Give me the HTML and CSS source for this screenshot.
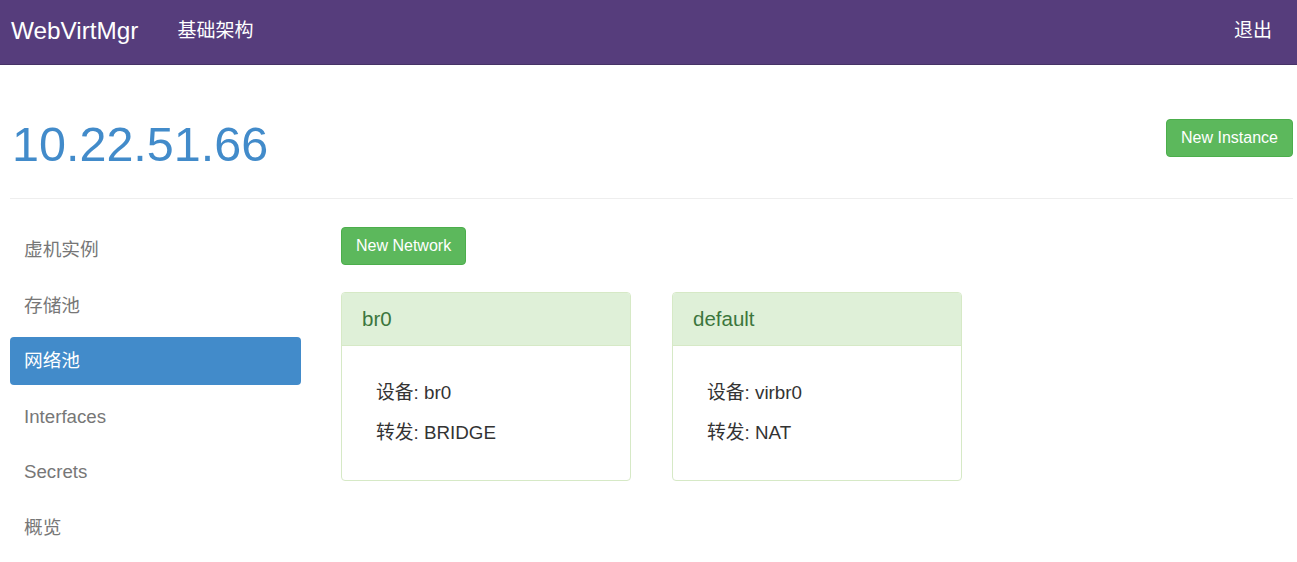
FILE: index.html
```html
<!DOCTYPE html>
<html lang="zh">
<head>
<meta charset="utf-8">
<title>WebVirtMgr</title>
<link rel="stylesheet" href="styles.css">
</head>
<body>
<nav class="topbar">
  <a class="brand" href="#">WebVirtMgr</a>
  <a class="toplink" href="#">基础架构</a>
  <a class="toplink logout" href="#">退出</a>
</nav>
<div class="page">
  <div class="page-head">
    <h1 class="host">10.22.51.66</h1>
    <a class="btn" href="#">New Instance</a>
  </div>
  <hr class="divider">
  <div class="content">
    <ul class="side">
      <li><a href="#">虚机实例</a></li>
      <li><a href="#">存储池</a></li>
      <li class="active"><a href="#">网络池</a></li>
      <li><a href="#">Interfaces</a></li>
      <li><a href="#">Secrets</a></li>
      <li><a href="#">概览</a></li>
    </ul>
    <div class="main">
      <a class="btn" href="#">New Network</a>
      <div class="cards">
        <div class="card">
          <div class="card-head">br0</div>
          <div class="card-body">
            <p>设备: br0</p>
            <p>转发: BRIDGE</p>
          </div>
        </div>
        <div class="card">
          <div class="card-head">default</div>
          <div class="card-body">
            <p>设备: virbr0</p>
            <p>转发: NAT</p>
          </div>
        </div>
      </div>
    </div>
  </div>
</div>
</body>
</html>
```

FILE: styles.css
```css
* { box-sizing: border-box; }
html, body { margin: 0; padding: 0; background: #fff; }
body {
  font-family: "Liberation Sans", Arial, "Noto Sans CJK SC", sans-serif;
  color: #333;
  font-size: 16px;
}
a { text-decoration: none; }

.topbar {
  height: 65px;
  background: #563d7c;
  border-bottom: 1px solid #463266;
  display: flex;
  align-items: center;
  padding: 0 25px 2px 10px;
}
.brand {
  color: #fff;
  font-size: 24.3px;
  line-height: 30px;
  margin-left: 1px;
}
.toplink {
  color: #fff;
  font-size: 19px;
  line-height: 26px;
  margin-left: 39px;
}
.logout { margin-left: auto; }

.page { padding: 0 4px 0 10px; }
.page-head {
  display: flex;
  justify-content: space-between;
  align-items: flex-start;
  padding-top: 53px;
}
.host {
  margin: 0 0 0 2px;
  font-size: 48.5px;
  line-height: 53px;
  font-weight: normal;
  color: #428bca;
}
.btn {
  display: inline-block;
  background: #5cb85c;
  border: 1px solid #4cae4c;
  border-radius: 4px;
  color: #fff;
  font-size: 16px;
  line-height: 22px;
  padding: 7px 14px;
}
.page-head .btn { margin-top: 1px; }

.divider {
  border: 0;
  border-top: 1px solid #eee;
  margin: 27px 0 0 0;
}

.content {
  display: flex;
  gap: 40px;
  padding-top: 26px;
}
.side {
  list-style: none;
  margin: 0;
  padding: 1px 0 0 0;
  width: 291px;
  display: flex;
  flex-direction: column;
  gap: 7.6px;
}
.side a {
  display: block;
  padding: 12px 14px;
  font-size: 18.7px;
  line-height: 24px;
  color: #777;
  border-radius: 4px;
}
.side .active a {
  background: #428bca;
  color: #fff;
}

.main { padding-top: 2px; }
.cards {
  display: flex;
  gap: 41px;
  margin-top: 27px;
}
.card {
  width: 290px;
  border: 1px solid #d6e9c6;
  border-radius: 4px;
  overflow: hidden;
}
.card-head {
  background: #dff0d8;
  border-bottom: 1px solid #d6e9c6;
  color: #3c763d;
  font-size: 20.5px;
  line-height: 22px;
  padding: 15px 20px;
}
.card-body {
  padding: 27px 20px 27px 34px;
}
.card-body p {
  margin: 0;
  font-size: 18.8px;
  line-height: 40px;
  color: #333;
}
```
